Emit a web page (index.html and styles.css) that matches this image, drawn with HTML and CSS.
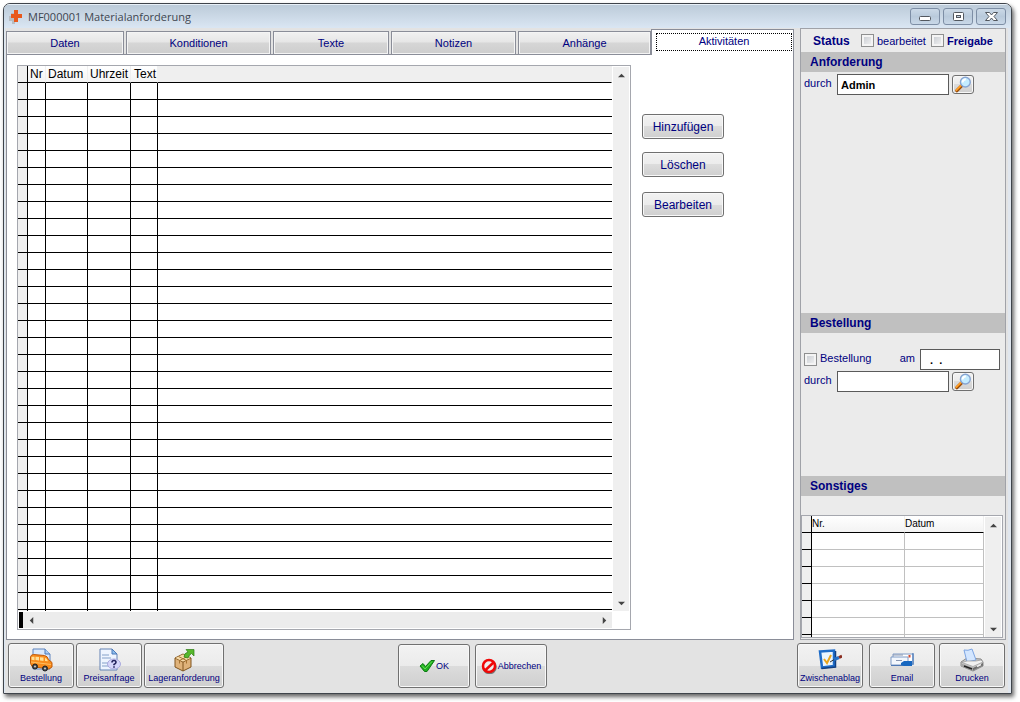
FILE: index.html
```html
<!DOCTYPE html>
<html lang="de">
<head>
<meta charset="utf-8">
<title>MF000001 Materialanforderung</title>
<link rel="stylesheet" href="styles.css">
</head>
<body>
<div class="window">
  <header class="titlebar">
    <svg class="app-icon" viewBox="0 0 16 16" aria-hidden="true"><path d="M3 4h4v3h3v4H7v4H4v-3H1V7h2z" fill="#b9bdc2"/><path d="M6 1h4v4h4v4h-4v4H6V9H3V5h3z" fill="#e8591c"/></svg>
    <h1 class="title">MF000001 Materialanforderung</h1>
    <div class="window-buttons">
      <button class="win-btn" type="button" aria-label="Minimieren"><svg viewBox="0 0 14 12"><rect x="1.500" y="5.500" width="11" height="4" rx="1" fill="#fff" stroke="#53585f"/></svg></button>
      <button class="win-btn" type="button" aria-label="Maximieren"><svg viewBox="0 0 14 12"><rect x="2.500" y="1.500" width="10" height="8" rx="1" fill="#fff" stroke="#53585f"/><rect x="5.500" y="4.500" width="4" height="2" fill="#c5d3e2" stroke="#53585f"/></svg></button>
      <button class="win-btn" type="button" aria-label="Schließen"><svg viewBox="0 0 14 12"><path d="M1.500 1.500h4l2 2.500 2-2.500h4L10 5.500l3.500 4h-4l-2-2.500-2 2.500h-4l3.500-4z" fill="#fff" stroke="#53585f"/></svg></button>
    </div>
  </header>

  <div class="workspace">
    <main class="main">
      <div class="tabs" role="tablist">
        <button class="tab" type="button" role="tab">Daten</button>
        <button class="tab" type="button" role="tab">Konditionen</button>
        <button class="tab" type="button" role="tab">Texte</button>
        <button class="tab" type="button" role="tab">Notizen</button>
        <button class="tab" type="button" role="tab">Anhänge</button>
        <button class="tab tab-active" type="button" role="tab" aria-selected="true"><span class="tab-focus">Aktivitäten</span></button>
      </div>
      <section class="panel">
        <div class="grid-box">
          <div class="grid-view">
            <table class="grid">
              <colgroup><col class="c-mark"><col class="c-nr"><col class="c-date"><col class="c-time"><col class="c-text"><col></colgroup>
              <thead><tr><th></th><th>Nr</th><th>Datum</th><th>Uhrzeit</th><th>Text</th><th></th></tr></thead>
              <tbody>
                <tr><td></td><td></td><td></td><td></td><td></td><td></td></tr>
                <tr><td></td><td></td><td></td><td></td><td></td><td></td></tr>
                <tr><td></td><td></td><td></td><td></td><td></td><td></td></tr>
                <tr><td></td><td></td><td></td><td></td><td></td><td></td></tr>
                <tr><td></td><td></td><td></td><td></td><td></td><td></td></tr>
                <tr><td></td><td></td><td></td><td></td><td></td><td></td></tr>
                <tr><td></td><td></td><td></td><td></td><td></td><td></td></tr>
                <tr><td></td><td></td><td></td><td></td><td></td><td></td></tr>
                <tr><td></td><td></td><td></td><td></td><td></td><td></td></tr>
                <tr><td></td><td></td><td></td><td></td><td></td><td></td></tr>
                <tr><td></td><td></td><td></td><td></td><td></td><td></td></tr>
                <tr><td></td><td></td><td></td><td></td><td></td><td></td></tr>
                <tr><td></td><td></td><td></td><td></td><td></td><td></td></tr>
                <tr><td></td><td></td><td></td><td></td><td></td><td></td></tr>
                <tr><td></td><td></td><td></td><td></td><td></td><td></td></tr>
                <tr><td></td><td></td><td></td><td></td><td></td><td></td></tr>
                <tr><td></td><td></td><td></td><td></td><td></td><td></td></tr>
                <tr><td></td><td></td><td></td><td></td><td></td><td></td></tr>
                <tr><td></td><td></td><td></td><td></td><td></td><td></td></tr>
                <tr><td></td><td></td><td></td><td></td><td></td><td></td></tr>
                <tr><td></td><td></td><td></td><td></td><td></td><td></td></tr>
                <tr><td></td><td></td><td></td><td></td><td></td><td></td></tr>
                <tr><td></td><td></td><td></td><td></td><td></td><td></td></tr>
                <tr><td></td><td></td><td></td><td></td><td></td><td></td></tr>
                <tr><td></td><td></td><td></td><td></td><td></td><td></td></tr>
                <tr><td></td><td></td><td></td><td></td><td></td><td></td></tr>
                <tr><td></td><td></td><td></td><td></td><td></td><td></td></tr>
                <tr><td></td><td></td><td></td><td></td><td></td><td></td></tr>
                <tr><td></td><td></td><td></td><td></td><td></td><td></td></tr>
                <tr><td></td><td></td><td></td><td></td><td></td><td></td></tr>
                <tr><td></td><td></td><td></td><td></td><td></td><td></td></tr>
                <tr><td></td><td></td><td></td><td></td><td></td><td></td></tr>
              </tbody>
            </table>
          </div>
          <div class="scroll-v">
            <button class="arrow" type="button" aria-label="Nach oben"><svg viewBox="0 0 8 8"><path d="M4 2l4 4H0z"/></svg></button>
            <button class="arrow" type="button" aria-label="Nach unten"><svg viewBox="0 0 8 8"><path d="M0 2h8L4 6z"/></svg></button>
          </div>
          <div class="scroll-h">
            <span class="split-mark"></span>
            <button class="arrow" type="button" aria-label="Nach links"><svg viewBox="0 0 8 8"><path d="M6 0v8L2 4z"/></svg></button>
            <button class="arrow arrow-end" type="button" aria-label="Nach rechts"><svg viewBox="0 0 8 8"><path d="M2 0l4 4-4 4z"/></svg></button>
          </div>
        </div>
        <div class="actions">
          <button class="btn action" type="button">Hinzufügen</button>
          <button class="btn action" type="button">Löschen</button>
          <button class="btn action action-last" type="button">Bearbeiten</button>
        </div>
      </section>
    </main>

    <aside class="sidebar">
      <div class="status">
        <strong class="status-title">Status</strong>
        <input class="check" type="checkbox" id="edited"><label class="status-edited" for="edited">bearbeitet</label>
        <input class="check" type="checkbox" id="released"><label class="status-released" for="released">Freigabe</label>
      </div>

      <h2 class="section-title">Anforderung</h2>
      <div class="section request">
        <div class="field-row">
          <label class="by-label" for="req-by">durch</label>
          <input class="field field-name" id="req-by" type="text" value="Admin">
          <button class="btn search" type="button" aria-label="Anforderer suchen"><svg viewBox="0 0 20 18"><path d="M3.500 15.500l5-5" stroke="#9a4e0c" stroke-width="3.500" stroke-linecap="round"/><path d="M3 15l5-5" stroke="#ff9d24" stroke-width="2" stroke-linecap="round"/><circle cx="12.500" cy="6.500" r="5.200" fill="#c4ecff" stroke="#86a4d2" stroke-width="1.500"/><path d="M9.500 7q0-3 3.500-3.500" stroke="#fff" stroke-width="2" fill="none"/></svg></button>
        </div>
      </div>

      <h2 class="section-title">Bestellung</h2>
      <div class="section order">
        <div class="field-row">
          <input class="check" type="checkbox" id="ordered"><label class="ordered-label" for="ordered">Bestellung</label>
          <label class="date-label" for="order-date">am</label>
          <input class="field field-date" id="order-date" type="text" value=".  .">
        </div>
        <div class="field-row">
          <label class="by-label" for="order-by">durch</label>
          <input class="field field-name" id="order-by" type="text">
          <button class="btn search" type="button" aria-label="Besteller suchen"><svg viewBox="0 0 20 18"><path d="M3.500 15.500l5-5" stroke="#9a4e0c" stroke-width="3.500" stroke-linecap="round"/><path d="M3 15l5-5" stroke="#ff9d24" stroke-width="2" stroke-linecap="round"/><circle cx="12.500" cy="6.500" r="5.200" fill="#c4ecff" stroke="#86a4d2" stroke-width="1.500"/><path d="M9.500 7q0-3 3.500-3.500" stroke="#fff" stroke-width="2" fill="none"/></svg></button>
        </div>
      </div>

      <h2 class="section-title">Sonstiges</h2>
      <div class="section other">
        <div class="mini-box">
          <div class="grid-view">
            <table class="grid mini">
              <colgroup><col class="c-mark"><col class="c-no"><col></colgroup>
              <thead><tr><th></th><th>Nr.</th><th>Datum</th></tr></thead>
              <tbody>
                <tr><td></td><td></td><td></td></tr>
                <tr><td></td><td></td><td></td></tr>
                <tr><td></td><td></td><td></td></tr>
                <tr><td></td><td></td><td></td></tr>
                <tr><td></td><td></td><td></td></tr>
                <tr><td></td><td></td><td></td></tr>
                <tr><td></td><td></td><td></td></tr>
              </tbody>
            </table>
          </div>
          <div class="scroll-v">
            <button class="arrow" type="button" aria-label="Nach oben"><svg viewBox="0 0 8 8"><path d="M4 2l4 4H0z"/></svg></button>
            <button class="arrow" type="button" aria-label="Nach unten"><svg viewBox="0 0 8 8"><path d="M0 2h8L4 6z"/></svg></button>
          </div>
        </div>
      </div>
    </aside>
  </div>

  <footer class="toolbar">
    <div class="group">
      <button class="btn tool" type="button">
        <svg class="tool-icon" viewBox="0 0 24 24"><path d="M4 1h12l5 5v15H4z" fill="#dbe9fa" stroke="#5f84bd"/><path d="M16 1v5h5" fill="#a9cdf2" stroke="#4a78b8"/><path d="M1.500 9q.5-2.500 3-2.500l11 1q3 .5 4 4l3.500 3v4.500l-3 2-17-2.500-1.500-3z" fill="#f98c1c" stroke="#c05a08"/><path d="M2.500 8.800h3v3.500l-3-.5zM6.500 8.800l3.500.3v3.500l-3.500-.5zM11 9.200l3.500.3v3.500l-3.500-.5zM16 9.800q2 .2 3 3.500l-3-.2z" fill="#ffdf94"/><path d="M2 14l20 2.500" stroke="#ffc061"/><circle cx="6" cy="18.500" r="2.500" fill="#444" stroke="#222"/><circle cx="16" cy="20.500" r="2.500" fill="#444" stroke="#222"/><circle cx="6" cy="18.500" r="1" fill="#ccc"/><circle cx="16" cy="20.500" r="1" fill="#ccc"/></svg>
        <span>Bestellung</span>
      </button>
      <button class="btn tool" type="button">
        <svg class="tool-icon" viewBox="0 0 24 24"><path d="M3 1h12l5 5v16H3z" fill="#eef5ff" stroke="#6483b4"/><path d="M15 1v5h5z" fill="#8fc0ef" stroke="#4a78b8"/><path d="M5 7h7M5 10h9M5 15h6M5 18h6" stroke="#b9cbe4" stroke-width="2"/><ellipse cx="17" cy="16" rx="6.500" ry="5" fill="#d6d6fa" stroke="#a9a9dd"/><path d="M15 14.500q0-2 2-2t2 1.700q0 1.200-2 2.300v.7M17 18.300v1.500" fill="none" stroke="#23235c" stroke-width="1.600"/></svg>
        <span>Preisanfrage</span>
      </button>
      <button class="btn tool tool-wide" type="button">
        <svg class="tool-icon" viewBox="0 0 24 24"><path d="M3 10l8-4 8 4v9l-8 4-8-4z" fill="#dfb27a" stroke="#80551e"/><path d="M3 10l8 4 8-4M11 14v9" fill="none" stroke="#80551e"/><path d="M3.500 10L11 6.500l7.500 3.500L11 13.500z" fill="#f5d9a8"/><path d="M6.500 8.500l8 4v3M15.500 8.500l-8 4v3" fill="none" stroke="#a67433"/><path d="M12 9q0-4 4-5l-2-2.500h8v6.500l-2.500-2.500Q17 7 16 10z" fill="#57b82c" stroke="#2f7d17" stroke-width=".7"/></svg>
        <span>Lageranforderung</span>
      </button>
    </div>
    <div class="group group-center">
      <button class="btn confirm" type="button">
        <svg class="confirm-icon" viewBox="0 0 16 16"><path d="M1 8l3-2.500L6.500 8.500 12 2.500h3.500L8 13.500H5.500z" fill="#1fae1f" stroke="#0c7a12"/><path d="M3 7.500l3 3.500 7-7.500" fill="none" stroke="#67dc55"/></svg>
        <span>OK</span>
      </button>
      <button class="btn confirm" type="button">
        <svg class="confirm-icon" viewBox="0 0 16 16"><circle cx="8.500" cy="9" r="6" fill="none" stroke="#777" stroke-width="2.500"/><circle cx="8" cy="8" r="6" fill="#eee" stroke="#f00808" stroke-width="2.500"/><path d="M4 12.500l8.500-8" stroke="#f00808" stroke-width="2.500"/></svg>
        <span>Abbrechen</span>
      </button>
    </div>
    <div class="group group-end">
      <button class="btn tool tool-clip" type="button">
        <svg class="tool-icon" viewBox="0 0 24 24"><path d="M2 3.500l14-1v15.500l-12 1.500z" fill="#eaf5ff" stroke="#1e6cc8" stroke-width="2.500"/><path d="M3.500 20.500l14-1.500V3" stroke="#123f80" stroke-width="1.500"/><path d="M6 11l3 4 4-8" fill="none" stroke="#e9a51d" stroke-width="2"/><path d="M12 14l5-3" stroke="#333" stroke-width="1"/><path d="M16 11.500l5-2" stroke="#2470c7" stroke-width="3.500"/><path d="M21 9.500l3-1.500" stroke="#8a2c20" stroke-width="3"/></svg>
        <span>Zwischenablag</span>
      </button>
      <button class="btn tool tool-mail" type="button">
        <svg class="tool-icon" viewBox="0 0 24 24"><path d="M3 6h20v10H3z" fill="#fff" stroke="#7f9bc6"/><path d="M23 5v12" stroke="#2f66b0"/><path d="M1 9h17v8H1z" fill="#f3f7fd" stroke="#7f9bc6"/><path d="M1 17.500h17" stroke="#4f79b5"/><path d="M3 7h10M6 12.500h6" stroke="#8795b0"/><rect x="18.500" y="7" width="2" height="2.500" fill="#d24a30"/><path d="M11 15l3-2h8v5h-8l-3-1z" fill="#1767c0"/></svg>
        <span>Email</span>
      </button>
      <button class="btn tool" type="button">
        <svg class="tool-icon" viewBox="0 0 24 24"><path d="M1 14l6-4 14 1 2 3v4l-10 5-12-5z" fill="#c9c9c9" stroke="#888"/><path d="M4 2q4 1 8-1l4 11-9 2z" fill="#d3e6ff" stroke="#7ba4e2"/><path d="M2 14.500l5-1.500 9 0 5-1 2 2-10 4.500z" fill="#f1f1f1" stroke="#999" stroke-width=".7"/><path d="M1 15.500l12 4v3l-12-4z" fill="#a6a6a6"/><path d="M13 20l10-5v2.500l-10 5z" fill="#6e6e6e"/><path d="M4 18l8 3" stroke="#222" stroke-width="1.500"/><path d="M17 18.500l4-2" stroke="#eee" stroke-width="1.500"/></svg>
        <span>Drucken</span>
      </button>
    </div>
  </footer>
</div>
</body>
</html>
```
FILE: styles.css
```css
* {
  box-sizing: border-box;
}

body {
  margin: 0;
  height: 100vh;
  padding: 3px 8px 8px 3px;
  background: #fff;
  color: #000080;
  font: 11px/14px "Liberation Sans", Arial, sans-serif;
}

button,
input {
  font: inherit;
  color: inherit;
  margin: 0;
}

button {
  padding: 0;
}

.window {
  display: flex;
  flex-direction: column;
  height: 100%;
  border: 1px solid #3f444b;
  border-radius: 7px 7px 1px 1px;
  background: #e3e3e3;
  box-shadow: 2px 3px 4px rgba(0, 0, 0, 0.6), inset 1px 0 #dbe6f2, inset -3px 0 #e0e6ee;
  overflow: hidden;
}

/* Title bar */
.titlebar {
  display: flex;
  align-items: center;
  height: 24px;
  flex: none;
  padding: 0 5px 0 4px;
  gap: 4px;
  background: linear-gradient(#bccbd9, #dae6f3);
  border-top: 1px solid #e8f0f8;
}

.app-icon {
  width: 16px;
  height: 16px;
}

.title {
  margin: 0;
  flex: 1;
  font: 11px/16px "Open Sans", "Noto Sans", sans-serif;
  color: #3e4650;
}

.window-buttons {
  display: flex;
  gap: 3px;
}

.win-btn {
  width: 30px;
  height: 17px;
  display: flex;
  align-items: center;
  justify-content: center;
  border: 1px solid #7d8ea5;
  border-radius: 3px;
  background: linear-gradient(#cbd9e7, #b9cadb 50%, #c9d8e8);
}

.win-btn svg {
  width: 14px;
  height: 12px;
  flex: none;
}

/* Work area */
.workspace {
  flex: 1;
  min-height: 0;
  display: flex;
  gap: 6px;
  padding: 0 5px 0 2px;
}

.main {
  flex: 1;
  min-width: 0;
  display: flex;
  flex-direction: column;
  padding-top: 1px;
}

.tabs {
  display: grid;
  grid-template-columns: 118fr 145fr 116fr 125fr 133fr 141fr;
  column-gap: 2px;
  align-items: end;
  height: 26px;
  margin-bottom: -1px;
  flex: none;
}

.tab {
  height: 24px;
  border: 1px solid #8a8d98;
  box-shadow: inset 0 0 0 1px #f4f4f4;
  background: linear-gradient(#f1f1f1, #e6e6e6 45%, #d6d6d6 50%, #cdcdcd);
}

.tab-active {
  height: 26px;
  margin-left: -2px;
  padding: 3px 1px 4px 4px;
  border-bottom: 0;
  box-shadow: none;
  background: #fff;
  z-index: 1;
}

.tab-focus {
  display: block;
  height: 18px;
  line-height: 14px;
  border: 1px dotted #000;
}

.panel {
  flex: 1;
  min-height: 0;
  display: flex;
  gap: 11px;
  padding: 10px 69px 9px 10px;
  border: 1px solid #8a8d98;
  background: #fff;
}

/* Data grid */
.grid-box {
  flex: 1;
  min-width: 0;
  display: grid;
  grid-template: minmax(0, 1fr) 18px / minmax(0, 1fr) 18px;
  border: 1px solid #a5a7ae;
}

.grid-view {
  overflow: hidden;
}

.grid {
  width: 100%;
  table-layout: fixed;
  border-collapse: separate;
  border-spacing: 0;
  color: #000;
  font-size: 12px;
}

.c-mark { width: 10px; }
.c-nr { width: 18px; }
.c-date { width: 42px; }
.c-time { width: 43px; }
.c-text { width: 27px; }
.c-no { width: 93px; }

.grid th,
.grid td {
  height: 17px;
  padding: 0;
  border: 0 solid #000;
  border-width: 0 1px 1px 0;
}

.grid th {
  padding-left: 2px;
  border-right-color: #efefef;
  background: #efefef;
  font-weight: normal;
  line-height: 16px;
  text-align: left;
  white-space: nowrap;
}

.grid th:not(:first-child):not(:last-child) {
  background: linear-gradient(#fff, #f3f3f3);
}

.grid th:nth-child(5) {
  padding-left: 3px;
}

.grid th:first-child {
  border-right-color: #000;
}

.grid td:first-child {
  background: #efefef;
}

.grid td:last-child {
  border-right: 0;
}

.scroll-v {
  display: flex;
  flex-direction: column;
  justify-content: space-between;
  margin: 1px 1px 0 1px;
  background: #efefef;
}

.scroll-h {
  display: flex;
  margin: 1px 0 1px 1px;
  background: #ececec;
}

.split-mark {
  width: 4px;
  background: #000;
}

.arrow {
  width: 16px;
  height: 16px;
  display: flex;
  align-items: center;
  justify-content: center;
  border: 0;
  background: transparent;
}

.arrow-end {
  margin-left: auto;
}

.arrow svg {
  width: 7px;
  height: 7px;
  fill: #444;
}

/* Buttons */
.btn {
  border: 1px solid #707070;
  border-radius: 3px;
  box-shadow: inset 0 0 0 1px #f8f8f8;
  background: linear-gradient(#f2f2f2, #ebebeb 50%, #dcdcdc 50%, #cfcfcf);
}

.actions {
  display: flex;
  flex-direction: column;
  width: 82px;
  padding-top: 49px;
  gap: 13px;
}

.action {
  height: 25px;
  font-size: 12px;
}

.action-last {
  margin-top: 2px;
}

/* Sidebar */
.sidebar {
  width: 206px;
  flex: none;
  display: flex;
  flex-direction: column;
  border: 1px solid #a0a2a8;
  background: #ebebeb;
}

.status {
  display: flex;
  align-items: center;
  height: 23px;
  padding-left: 12px;
  flex: none;
}

.status-title {
  width: 48px;
  font-size: 12px;
}

.status-edited {
  width: 57px;
  padding-left: 3px;
}

.status-released {
  padding-left: 3px;
  font-weight: bold;
}

.check {
  appearance: none;
  width: 13px;
  height: 13px;
  flex: none;
  border: 1px solid #8e8f8f;
  background: linear-gradient(135deg, #c4c8ce, #f6f6f6);
  box-shadow: inset 0 0 0 2px #f4f4f4;
}

.section-title {
  height: 20px;
  margin: 0;
  padding-left: 9px;
  flex: none;
  background: #c0c0c0;
  font-size: 12px;
  line-height: 20px;
}

.request {
  flex: 1;
  padding-top: 2px;
}

.order {
  height: 143px;
  padding-top: 16px;
}

.other {
  height: 143px;
  padding: 19px 2px 1px 0;
}

.field-row {
  display: flex;
  align-items: center;
  height: 21px;
  margin: 0 5px 1px 3px;
}

.by-label {
  width: 33px;
  padding-bottom: 3px;
}

.field {
  height: 21px;
  padding: 0 3px;
  border: 1px solid #5a5a5a;
  border-radius: 0;
  background: #fff;
  color: #000;
  font-weight: bold;
}

.field-name {
  width: 112px;
}

.search {
  width: 22px;
  height: 19px;
  margin-left: 3px;
}

.search svg {
  display: block;
  width: 20px;
  height: 17px;
  fill: none;
}

.ordered-label {
  padding: 0 0 3px 3px;
}

.date-label {
  margin-left: auto;
  padding: 0 5px 3px 0;
}

.field-date {
  width: 80px;
  padding-left: 9px;
  white-space: pre;
}

.mini-box {
  height: 100%;
  display: grid;
  grid-template-columns: minmax(0, 1fr) 18px;
  border: 1px solid #a5a7ae;
  background: #fff;
}

.mini {
  font-size: 10px;
}

.mini th {
  padding-left: 0;
}

.mini td + td {
  border-color: #c0c0c0;
}

.mini th:last-child {
  background: linear-gradient(#fff, #f3f3f3);
}

.mini td:last-child {
  border-right: 1px solid #c0c0c0;
}

/* Bottom toolbar */
.toolbar {
  display: flex;
  flex: none;
  height: 53px;
  padding: 3px 6px 0 4px;
  align-items: flex-start;
  font-size: 9px;
  line-height: 12px;
}

.group {
  display: flex;
  gap: 2px;
}

.group-center {
  gap: 5px;
  margin: 1px 0 0 174px;
}

.group-end {
  gap: 4px;
  margin-left: auto;
}

.tool {
  width: 66px;
  height: 45px;
  display: flex;
  flex-direction: column;
  align-items: center;
  justify-content: center;
  white-space: nowrap;
  overflow: hidden;
}

.tool-wide {
  width: 80px;
}

.tool-clip {
  margin-right: 2px;
}

.tool-icon {
  width: 24px;
  height: 24px;
  flex: none;
  fill: none;
}

.confirm {
  width: 72px;
  height: 44px;
  display: flex;
  align-items: center;
  justify-content: center;
  gap: 1px;
}

.confirm-icon {
  width: 16px;
  height: 16px;
}
```
